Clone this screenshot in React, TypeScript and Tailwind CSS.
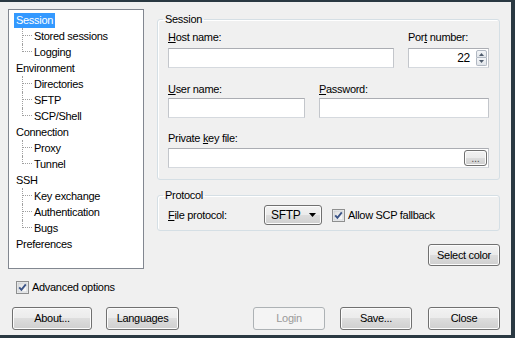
import type { ReactNode } from "react";

const TREE: { label: string; selected?: boolean; children?: string[] }[] = [
  { label: "Session", selected: true, children: ["Stored sessions", "Logging"] },
  { label: "Environment", children: ["Directories", "SFTP", "SCP/Shell"] },
  { label: "Connection", children: ["Proxy", "Tunnel"] },
  { label: "SSH", children: ["Key exchange", "Authentication", "Bugs"] },
  { label: "Preferences" },
];

const FACE =
  "rounded-[3px] border border-[#707070] bg-[linear-gradient(#f2f2f2_0%,#ebebeb_50%,#dddddd_50%,#cfcfcf_100%)] shadow-[inset_0_0_0_1px_#fcfcfc]";

const FIELD = "border border-[#abadb3] border-b-[#d5d9de] border-l-[#c3c6cb] border-r-[#c3c6cb] bg-white";

function Button({ children, className = "", disabled }: { children: ReactNode; className?: string; disabled?: boolean }) {
  if (disabled) {
    return (
      <div className={`flex items-center justify-center rounded-[3px] border border-[#adb2b5] bg-[#f4f4f4] text-[#9a9a9a] ${className}`}>
        {children}
      </div>
    );
  }
  return <div className={`flex items-center justify-center ${FACE} ${className}`}>{children}</div>;
}

function Checkbox() {
  return (
    <svg width="13" height="13" viewBox="0 0 13 13" className="shrink-0">
      <defs>
        <linearGradient id="cbg" x1="0" y1="0" x2="1" y2="1">
          <stop offset="0" stopColor="#dcdcdc" />
          <stop offset="1" stopColor="#ffffff" />
        </linearGradient>
      </defs>
      <rect x="0.5" y="0.5" width="12" height="12" fill="#f4f4f4" stroke="#8e8f8f" />
      <rect x="2" y="2" width="9" height="9" fill="url(#cbg)" stroke="#c9cdd2" strokeWidth="0.8" />
      <path d="M3.2 6.3 L5.4 8.8 L9.8 3.4" fill="none" stroke="#3b5487" strokeWidth="1.9" />
    </svg>
  );
}

function Label({ children }: { children: ReactNode }) {
  return <div className="leading-[13px] whitespace-nowrap">{children}</div>;
}

export default function App() {
  return (
    <div className="h-[338px] w-[515px] bg-[#2a3942] pb-[3px] pr-[4px] pt-[2px] font-['Liberation_Sans',Arial,sans-serif] text-[11px] tracking-[-0.3px] text-black">
      <div className="flex h-full flex-col bg-[#f0f0f0]">
        <div className="flex pl-[8px] pt-[7px]">
          {/* navigation tree */}
          <div className="h-[260px] w-[136px] border border-[#828790] bg-white pt-[2px]">
            {TREE.map((node) => (
              <div key={node.label}>
                <div className="flex h-4 items-center pl-[5px]">
                  <span className={node.selected ? "bg-[#3399ff] px-[2px] leading-[15px] text-white" : "px-[2px]"}>
                    {node.label}
                  </span>
                </div>
                {node.children?.map((c, i) => {
                  const last = i === node.children!.length - 1;
                  return (
                    <div key={c} className="flex h-4 items-center pl-[13px]">
                      <span className="relative h-full w-3">
                        <span
                          className={`absolute left-0 top-0 border-l border-dotted border-[#a0a0a0] ${last ? "h-[8px]" : "h-full"}`}
                        />
                        <span className="absolute left-px top-[7px] w-[9px] border-t border-dotted border-[#a0a0a0]" />
                      </span>
                      <span>{c}</span>
                    </div>
                  );
                })}
              </div>
            ))}
          </div>

          {/* right side */}
          <div className="ml-[13px] flex w-[343px] flex-col pt-[3px]">
            <fieldset className="rounded-[3px] border border-[#d5dfe5] px-[10px] pb-[11px] shadow-[inset_1px_1px_0_#ffffff]">
              <legend className="-ml-[5px] px-[2px] leading-[14px]">Session</legend>
              <div className="mt-[5px] flex gap-[14px]">
                <div className="w-[226px]">
                  <Label>
                    <span className="underline">H</span>ost name:
                  </Label>
                  <div className={`mt-[4px] h-[20px] ${FIELD}`} />
                </div>
                <div className="w-[81px]">
                  <Label>
                    Por<span className="underline">t</span> number:
                  </Label>
                  <div className={`mt-[4px] flex h-[20px] items-center ${FIELD}`}>
                    <span className="flex-1 pr-[6px] text-right text-[12px]">22</span>
                    <div className="mr-[1px] flex h-[16px] w-[11px] flex-col">
                      <div className="flex h-[8px] items-center justify-center rounded-t-[2px] border border-[#b1b8c2] bg-[linear-gradient(#f4f6f8,#e1e5ea)]">
                        <svg width="5" height="3" viewBox="0 0 5 3">
                          <path d="M0 3 L2.5 0 L5 3 Z" fill="#4d5a6b" />
                        </svg>
                      </div>
                      <div className="flex h-[8px] items-center justify-center rounded-b-[2px] border border-t-0 border-[#b1b8c2] bg-[linear-gradient(#f4f6f8,#e1e5ea)]">
                        <svg width="5" height="3" viewBox="0 0 5 3">
                          <path d="M0 0 L2.5 3 L5 0 Z" fill="#4d5a6b" />
                        </svg>
                      </div>
                    </div>
                  </div>
                </div>
              </div>

              <div className="mt-[15px] flex gap-[14px]">
                <div className="w-[137px]">
                  <Label>
                    <span className="underline">U</span>ser name:
                  </Label>
                  <div className={`mt-[2px] h-[20px] ${FIELD}`} />
                </div>
                <div className="w-[170px]">
                  <Label>
                    <span className="underline">P</span>assword:
                  </Label>
                  <div className={`mt-[2px] h-[20px] ${FIELD}`} />
                </div>
              </div>

              <div className="mt-[14px]">
                <Label>
                  Private <span className="underline">k</span>ey file:
                </Label>
                <div className={`mt-[3px] flex h-[20px] items-center justify-end pr-px ${FIELD}`}>
                  <Button className="h-[16px] w-[23px] text-[#555] leading-[10px]">...</Button>
                </div>
              </div>
            </fieldset>

            <fieldset className="mt-[8px] rounded-[3px] border border-[#d5dfe5] px-[10px] pb-[5px] shadow-[inset_1px_1px_0_#ffffff]">
              <legend className="-ml-[5px] px-[2px] leading-[14px]">Protocol</legend>
              <div className="mt-[3px] flex h-[20px] items-center">
                <div className="w-[96px]">
                  <span className="underline">F</span>ile protocol:
                </div>
                <div className={`flex h-[20px] w-[58px] items-center justify-between pl-[6px] pr-[5px] ${FACE}`}>
                  <span className="text-[12px]">SFTP</span>
                  <svg width="7" height="4" viewBox="0 0 7 4">
                    <path d="M0 0 L7 0 L3.5 4 Z" fill="#000" />
                  </svg>
                </div>
                <div className="ml-[10px] flex items-center">
                  <Checkbox />
                  <span className="ml-[3px] whitespace-nowrap">Allow SCP fallback</span>
                </div>
              </div>
            </fieldset>

            <Button className="mt-[13px] h-[22px] w-[72px] self-end">Select color</Button>
          </div>
        </div>

        <div className="mt-[10px] flex h-4 items-center pl-[16px]">
          <Checkbox />
          <span className="ml-[3px]">Advanced options</span>
        </div>

        <div className="mt-[12px] flex h-[23px]">
          <Button className="ml-[12px] w-[80px]">About...</Button>
          <Button className="ml-[14px] w-[73px]">Languages</Button>
          <Button className="ml-[74px] w-[72px]" disabled>
            Login
          </Button>
          <Button className="ml-[15px] w-[72px]">Save...</Button>
          <Button className="ml-[16px] w-[72px]">Close</Button>
        </div>
      </div>
    </div>
  );
}
